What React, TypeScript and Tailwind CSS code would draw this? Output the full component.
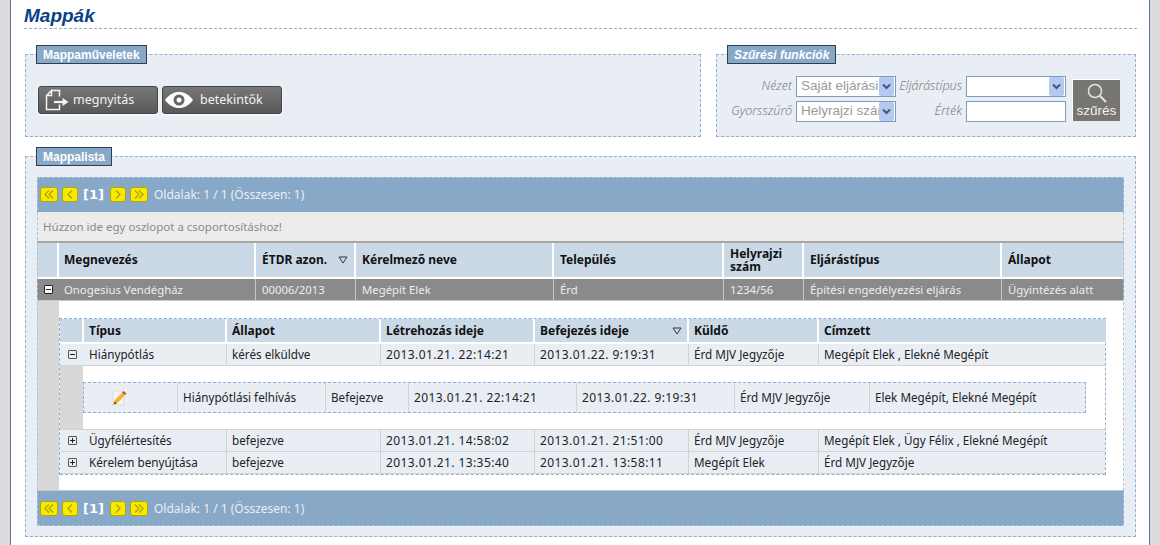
const FONT = "font-['Noto_Sans',sans-serif]";

const MAIN_COLS = "grid grid-cols-[22px_197px_100px_198px_170px_80px_198px_122px]";
const INNER_COLS = "grid grid-cols-[24px_143px_154px_154px_154px_130px_287px]";
const SUB_COLS = "grid grid-cols-[94px_148px_83px_168px_158px_135px_217px]";

function FileOutIcon() {
  return (
    <svg width="24" height="22" viewBox="0 0 24 22" fill="none" stroke="#f4f4f4" strokeWidth="1.500" className="shrink-0">
      <path d="M6.500 1.500h8v6M14.500 15.500v5H1.500V6.500l5-5v5h-5" />
      <path d="M9 13h10" strokeWidth="2.200" />
      <path d="M17.500 9l6 4-6 4z" fill="#f4f4f4" stroke="none" />
    </svg>
  );
}

function EyeIcon() {
  return (
    <svg width="28" height="18" viewBox="0 0 28 18" className="shrink-0">
      <path d="M0 9C4 3.500 9 1 14 1s10 2.500 14 8c-4 5.500-9 8-14 8S4 14.500 0 9z" fill="#fff" />
      <circle cx="14" cy="9" r="5.500" fill="#666" />
      <circle cx="14" cy="9" r="2.500" fill="#fff" />
    </svg>
  );
}

function NoteIcon() {
  return (
    <svg width="15" height="16" viewBox="0 0 15 16">
      <path d="M1 1h8l3 3v11H1z" fill="#f4f4f4" stroke="#dcdcdc" />
      <path d="M1.500 14.500l1-4 7.500-8 3 2.500-7.500 8z" fill="#f5b335" />
      <path d="M10 2.500l1.500-1.500L14.500 3.500 13 5z" fill="#e2402f" />
      <path d="M1.500 14.500l1-3 2.500 2z" fill="#6b5330" />
    </svg>
  );
}

function Chevron() {
  return (
    <span className="flex h-[19px] w-[15px] shrink-0 items-center justify-center rounded-[2px] bg-[#b4c9f0]">
      <svg width="9" height="7" viewBox="0 0 9 7" fill="none" stroke="#46557f" strokeWidth="2">
        <path d="M1 1.500l3.500 3.500L8 1.500" />
      </svg>
    </span>
  );
}

function Select({ text }: { text: string }) {
  return (
    <div className="flex h-[21px] w-[100px] items-center border border-[#7f9db9] bg-white pl-[4px] pr-[1px]">
      <span className="w-[79px] overflow-hidden whitespace-nowrap font-['Liberation_Sans',sans-serif] text-[13.5px] text-[#9a9a9a]">
        {text}
      </span>
      <Chevron />
    </div>
  );
}

function Legend({ title, italic }: { title: string; italic?: boolean }) {
  return (
    <legend
      className={`ml-[10px] flex h-[19px] items-center border border-[#2f3f52] bg-[#88a8c8] px-[6px] font-['Liberation_Sans',sans-serif] text-[12px] font-bold text-white ${
        italic ? "italic" : ""
      }`}
    >
      {title}
    </legend>
  );
}

function PagerButton({ d, wide }: { d: string; wide?: boolean }) {
  return (
    <span
      className={`flex h-[15px] items-center justify-center rounded-[3px] border border-[#b3a800] bg-[#f5ea00] ${
        wide ? "w-[18px]" : "w-[16px]"
      }`}
    >
      <svg width="12" height="9" viewBox="0 0 12 9" fill="none" stroke="#aca000" strokeWidth="1.200">
        <path d={d} />
      </svg>
    </span>
  );
}

function Pager() {
  return (
    <div className="flex h-[35px] items-center bg-[#88a8c8] pl-[3px] text-[12px] text-[#e8eef5]">
      <PagerButton d="M6 .5L2 4.500l4 4M10 .5L6 4.500l4 4" wide />
      <span className="ml-[4px]">
        <PagerButton d="M8 .5L4 4.500l4 4" />
      </span>
      <span className="ml-[5px] w-[27px] font-['DejaVu_Sans',sans-serif] text-[13px] font-bold text-white">[1]</span>
      <PagerButton d="M4 .5l4 4-4 4" />
      <span className="ml-[4px]">
        <PagerButton d="M2 .5l4 4-4 4M6 .5l4 4-4 4" wide />
      </span>
      <span className="ml-[6px]">Oldalak: 1 / 1 (Összesen: 1)</span>
    </div>
  );
}

function ToggleBox({ open, dark }: { open?: boolean; dark?: boolean }) {
  return (
    <span
      className={`relative block h-[9px] w-[9px] rounded-[1px] border ${
        dark ? "border-[#222] bg-white" : "border-[#555] bg-transparent"
      }`}
    >
      <span className="absolute left-[1px] top-[3px] h-[1px] w-[5px] bg-[#222]" />
      {!open && <span className="absolute left-[3px] top-[1px] h-[5px] w-[1px] bg-[#222]" />}
    </span>
  );
}

// dates run wider in the original font than the rest of the row
function cellText(c: string) {
  return c.startsWith("2013") ? "text-[12px] tracking-[0.4px]" : "text-[11.7px]";
}

function MainHeader() {
  const cell = "flex items-center border-b-2 border-r-2 border-white bg-[#cbd9e7] pl-[6px]";
  return (
    <div className={`${MAIN_COLS} h-[38px] border-t-2 border-[#a8a8a8] text-[12px] font-bold text-[#111]`}>
      <div className="border-b-2 border-r-2 border-white bg-[#cbd9e7]" />
      <div className="flex items-center border-b-2 border-r-2 border-white bg-[#cbd9e7] pl-[5px]">Megnevezés</div>
      <div className={`${cell} justify-between pr-[6px]`}>
        ÉTDR azon.
        <svg width="10" height="8" viewBox="0 0 10 8" fill="none" stroke="#333">
          <path d="M1 1h8L5 7z" />
        </svg>
      </div>
      <div className={cell}>Kérelmező neve</div>
      <div className={cell}>Település</div>
      <div className={`${cell} leading-[13px]`}>Helyrajzi szám</div>
      <div className={cell}>Eljárástípus</div>
      <div className="flex items-center border-b-2 border-white bg-[#cbd9e7] pl-[6px]">Állapot</div>
    </div>
  );
}

function MainRow() {
  const cells = [
    "Onogesius Vendégház",
    "00006/2013",
    "Megépít Elek",
    "Érd",
    "1234/56",
    "Építési engedélyezési eljárás",
    "Ügyintézés alatt",
  ];
  return (
    <div className={`${MAIN_COLS} h-[22px] border-b border-[#c8c8c8] bg-[#8a8a8a] text-[#ededed]`}>
      <div className="flex items-center justify-center">
        <ToggleBox open dark />
      </div>
      {cells.map((c, i) => (
        <div
          key={c}
          className={`flex items-center whitespace-nowrap border-r border-[#c8c8c8] pt-[1px] text-[11.35px] last:border-r-0 ${
            i === 0 ? "pl-[5px]" : "pl-[6px]"
          }`}
        >
          {c}
        </div>
      ))}
    </div>
  );
}

function InnerRow({ cells, open }: { cells: string[]; open?: boolean }) {
  return (
    <div className={`${INNER_COLS} h-[22px] border-b border-[#d2d2d2] bg-[#e9eef5] text-[#222]`}>
      <div className="flex items-center justify-center">
        <ToggleBox open={open} />
      </div>
      {cells.map((c, i) => (
        <div
          key={i}
          className={`flex items-center whitespace-nowrap border-r border-[#d2d2d2] pl-[5px] pt-[1px] last:border-r-0 ${cellText(c)}`}
        >
          {c}
        </div>
      ))}
    </div>
  );
}

function InnerTable() {
  const heads = ["Típus", "Állapot", "Létrehozás ideje", "Befejezés ideje", "Küldő", "Címzett"];
  return (
    <div className="w-[1047px] border-x border-t border-dashed border-[#8fb0d0]">
      <div className={`${INNER_COLS} h-[25px] border-b-2 border-white text-[12px] font-bold text-[#111]`}>
        <div className="border-r-2 border-white bg-[#cbd9e7]" />
        {heads.map((h) => (
          <div
            key={h}
            className="flex items-center justify-between border-r-2 border-white bg-[#cbd9e7] px-[5px] last:border-r-0"
          >
            {h}
            {h === "Befejezés ideje" && (
              <svg width="10" height="8" viewBox="0 0 10 8" fill="none" stroke="#333">
                <path d="M1 1h8L5 7z" />
              </svg>
            )}
          </div>
        ))}
      </div>
      <InnerRow
        open
        cells={[
          "Hiánypótlás",
          "kérés elküldve",
          "2013.01.21. 22:14:21",
          "2013.01.22. 9:19:31",
          "Érd MJV Jegyzője",
          "Megépít Elek , Elekné Megépít",
        ]}
      />
      <div className="flex h-[64px] border-b border-[#d2d2d2]">
        <div className="w-[23px] bg-[#d8d8d8]" />
        <div className="flex-1 bg-white pt-[16px]">
          <div className={`${SUB_COLS} h-[31px] w-[1003px] border border-dashed border-[#8fb0d0] bg-[#e9eef5] text-[#222]`}>
            <div className="flex items-center border-r border-[#d2d2d2] pl-[28px]">
              <NoteIcon />
            </div>
            {[
              "Hiánypótlási felhívás",
              "Befejezve",
              "2013.01.21. 22:14:21",
              "2013.01.22. 9:19:31",
              "Érd MJV Jegyzője",
              "Elek Megépít, Elekné Megépít",
            ].map((c) => (
              <div
                key={c}
                className={`flex items-center whitespace-nowrap border-r border-[#d2d2d2] pl-[5px] last:border-r-0 ${cellText(c)}`}
              >
                {c}
              </div>
            ))}
          </div>
        </div>
      </div>
      <InnerRow
        cells={[
          "Ügyfélértesítés",
          "befejezve",
          "2013.01.21. 14:58:02",
          "2013.01.21. 21:51:00",
          "Érd MJV Jegyzője",
          "Megépít Elek , Ügy Félix , Elekné Megépít",
        ]}
      />
      <div className="border-b border-dashed border-[#8fb0d0]">
        <InnerRow
          cells={[
            "Kérelem benyújtása",
            "befejezve",
            "2013.01.21. 13:35:40",
            "2013.01.21. 13:58:11",
            "Megépít Elek",
            "Érd MJV Jegyzője",
          ]}
        />
      </div>
    </div>
  );
}

export default function App() {
  const btn =
    "flex h-[28px] w-[120px] items-center rounded-[3px] border border-[#444] bg-gradient-to-b from-[#777] to-[#595959] text-[12.5px] text-[#f2f2f2] shadow-[0_1px_2px_#fff]";
  const label = "pr-[4px] text-right text-[12.5px] font-light italic text-[#808080]";

  return (
    <div className={`${FONT} flex h-[545px] w-[1160px] overflow-hidden bg-[#dcdcdf]`}>
      <div className="w-[10px]" />
      <div className="w-[1140px] border-x border-[#5d7692] bg-white pl-[13px] pr-[12px]">
        <h1 className="h-[29px] border-b border-dashed border-[#8fb0d0] pt-[5px] font-['Liberation_Sans',sans-serif] text-[19px] font-bold italic leading-[22px] text-[#0a4288]">
          Mappák
        </h1>

        <div className="mt-[16px] flex pl-[1px]">
          <fieldset className="h-[92px] w-[676px] border border-dashed border-[#8fb0d0] bg-[#e9eef5]">
            <Legend title="Mappaműveletek" />
            <div className="flex gap-[4px] pl-[12px] pt-[22px]">
              <div className={`${btn} pl-[6px]`}>
                <FileOutIcon />
                <span className="ml-[4px]">megnyitás</span>
              </div>
              <div className={`${btn} pl-[2px]`}>
                <EyeIcon />
                <span className="ml-[7px]">betekintők</span>
              </div>
            </div>
          </fieldset>

          <fieldset className="ml-[15px] h-[92px] w-[420px] border border-dashed border-[#8fb0d0] bg-[#e9eef5]">
            <Legend title="Szűrési funkciók" italic />
            <div className="flex items-start pt-[12px]">
              <div className="grid grid-cols-[79px_100px_70px_100px] items-center gap-y-[4px]">
                <span className={label}>Nézet</span>
                <Select text="Saját eljárási" />
                <span className={label}>Eljárástípus</span>
                <Select text="" />
                <span className={label}>Gyorsszűrő</span>
                <Select text="Helyrajzi szám" />
                <span className={label}>Érték</span>
                <div className="h-[21px] w-[100px] border border-[#7f9db9] bg-white" />
              </div>
              <div className="ml-[6px] mt-[3px] flex h-[42px] w-[48px] flex-col items-center border-l border-t border-white bg-[#787672] pt-[2px] font-['Liberation_Sans',sans-serif] text-[13.5px] leading-none text-[#f2f2f2]">
                <svg width="22" height="22" viewBox="0 0 22 22" fill="none" stroke="#e4e4e4">
                  <circle cx="9" cy="9" r="6.500" strokeWidth="1.500" />
                  <path d="M14 14l6 6" strokeWidth="2" />
                </svg>
                <span>szűrés</span>
              </div>
            </div>
          </fieldset>
        </div>

        <fieldset className="ml-[1px] mt-[10px] h-[390px] w-[1111px] border border-dashed border-[#8fb0d0] bg-[#e9eef5]">
          <Legend title="Mappalista" />
          <div className="ml-[11px] mt-[11px] w-[1087px] bg-white outline-1 -outline-offset-1 outline-dashed outline-[#a9c3dc]">
            <Pager />
            <div className="flex h-[29px] items-center bg-[#ececec] pl-[6px] text-[11.5px] text-[#8a8a8a]">
              Húzzon ide egy oszlopot a csoportosításhoz!
            </div>
            <MainHeader />
            <MainRow />
            <div className="flex h-[189px]">
              <div className="w-[22px] bg-[#d8d8d8]" />
              <div className="pt-[17px]">
                <InnerTable />
              </div>
            </div>
            <div className="border-t border-[#c8c8c8]">
              <Pager />
            </div>
          </div>
        </fieldset>
      </div>
    </div>
  );
}
